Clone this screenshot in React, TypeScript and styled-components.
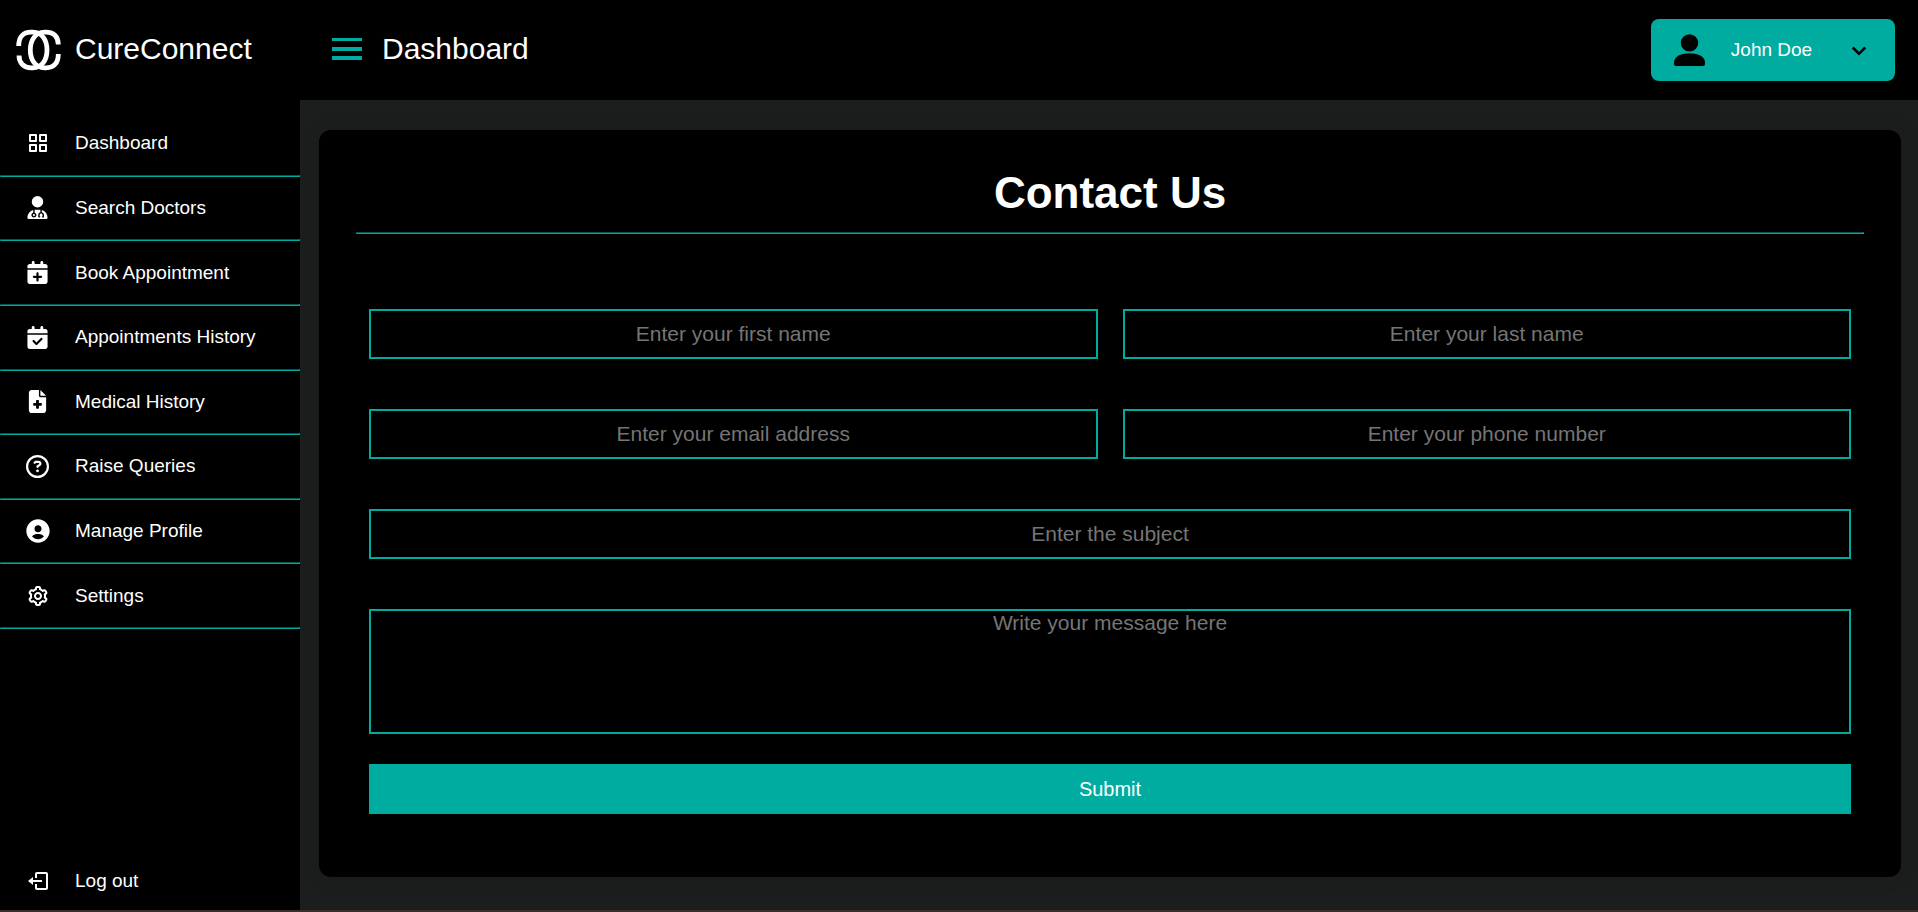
import React from 'react';
import styled, { createGlobalStyle } from 'styled-components';
import { BiGridAlt, BiCog, BiLogOut, BiChevronDown, BiSolidUserCircle } from 'react-icons/bi';
import {
  FaUserDoctor,
  FaCalendarPlus,
  FaCalendarCheck,
  FaFileMedical,
  FaRegCircleQuestion,
} from 'react-icons/fa6';
import type { IconType } from 'react-icons';

const teal = '#00aca0';

const GlobalStyle = createGlobalStyle`
  * { box-sizing: border-box; }
  body {
    margin: 0;
    background: #1c1e1d;
    color: #fff;
    font-family: "Liberation Sans", Arial, sans-serif;
  }
`;

const Page = styled.div`
  display: grid;
  grid-template-columns: 300px minmax(0, 1fr);
  grid-template-rows: 100px 1fr;
  min-height: 100vh;
  border-bottom: 2px solid #3a2e2a;
`;

const Brand = styled.a`
  display: flex;
  align-items: center;
  gap: 14px;
  padding-left: 16px;
  background: #000;
  color: #fff;
  font-size: 30px;
  line-height: 34px;
  text-decoration: none;
`;

const BrandName = styled.span`
  padding-bottom: 2px;
`;

const TopBar = styled.header`
  display: flex;
  align-items: center;
  justify-content: space-between;
  padding: 0 23px 0 32px;
  background: #000;
`;

const TopTitle = styled.div`
  display: flex;
  align-items: center;
  gap: 20px;
  padding-bottom: 2px;
  font-size: 30px;
  line-height: 34px;
`;

const MenuButton = styled.button`
  display: flex;
  padding: 0;
  border: 0;
  background: none;
  color: ${teal};
  cursor: pointer;
`;

const ProfileButton = styled.button`
  display: flex;
  align-items: center;
  width: 244px;
  height: 62px;
  padding: 0 21px 0 23px;
  border: 0;
  border-radius: 8px;
  background: ${teal};
  color: #000;
  font: 19px/24px "Liberation Sans", Arial, sans-serif;
  cursor: pointer;
`;

const ProfileName = styled.span`
  flex: 1;
  padding-right: 6px;
  color: #fff;
  text-align: center;
`;

const Sidebar = styled.nav`
  display: flex;
  flex-direction: column;
  justify-content: space-between;
  padding-top: 12px;
  background: #000;
`;

const NavList = styled.ul`
  display: grid;
  grid-template-rows: repeat(8, 1fr);
  height: 517px;
  margin: 0;
  padding: 0;
  list-style: none;
`;

const NavItem = styled.li`
  display: flex;
  flex-direction: column;
`;

const NavLink = styled.a`
  display: flex;
  flex: 1;
  align-items: center;
  gap: 25px;
  padding-left: 25px;
  color: #fff;
  font-size: 19px;
  line-height: 24px;
  text-decoration: none;
`;

const NavIcon = styled.span`
  display: flex;
  justify-content: center;
  width: 25px;

  svg { flex-shrink: 0; }
`;

const LogoutLink = styled(NavLink)`
  flex: none;
  height: 58px;
`;

const Rule = styled.hr`
  width: 100%;
  margin: 0;
  border: 1px inset ${teal};
`;

const Main = styled.main`
  padding: 30px 17px 33px 19px;
`;

const Card = styled.section`
  padding: 38px 37px 63px;
  border-radius: 12px;
  background: #000;
  box-shadow: 0 0 20px rgba(0, 0, 0, 0.1);
`;

const Heading = styled.h1`
  margin: 0 0 14px;
  font-size: 44px;
  line-height: 50px;
  text-align: center;
`;

const Form = styled.form`
  display: grid;
  grid-template-columns: repeat(2, minmax(0, 1fr));
  gap: 50px 25px;
  padding: 75px 13px 0;
`;

const Field = styled.input<{ $wide?: boolean }>`
  width: 100%;
  height: 50px;
  padding: 0;
  grid-column: ${p => (p.$wide ? '1 / -1' : 'auto')};
  border: 2px solid ${teal};
  border-radius: 0;
  background: #000;
  color: #fff;
  font: 21px/24px "Liberation Sans", Arial, sans-serif;
  text-align: center;
  &::placeholder { color: #757575; }
`;

const MessageGroup = styled.div`
  display: flex;
  flex-direction: column;
  gap: 30px;
  grid-column: 1 / -1;
`;

const Message = styled(Field).attrs({ as: 'textarea' })`
  height: 125px;
  resize: none;
`;

const Submit = styled.button`
  height: 50px;
  border: 0;
  background: ${teal};
  color: #fff;
  font: 20px/24px "Liberation Sans", Arial, sans-serif;
  cursor: pointer;
`;

const Logo = () => (
  <svg width="45" height="42" viewBox="0 0 45 42" fill="none" stroke="#fff" strokeWidth="4.8" aria-hidden="true">
    <path d="M2.7 17C2.7 8 7 3.2 15 3.2H17C26 3.2 31 11 31 21C31 31 26 38.8 17 38.8H15C8 38.8 3 34 3 26.5" />
    <path d="M42.3 15.5C42.3 8 38 3.2 30 3.2H28.5C19.5 3.2 14.3 11 14.3 21C14.3 31 19.5 38.8 28.5 38.8H30C38 38.8 42.3 34 42.3 25" />
  </svg>
);

const MenuIcon = () => (
  <svg width="30" height="22" viewBox="0 0 30 22" fill="currentColor" aria-hidden="true">
    <path d="M0 0H30V3H0ZM0 9H30V13H0ZM0 18H30V22H0Z" />
  </svg>
);

const PersonIcon = () => (
  <svg width="31" height="32" viewBox="0 0 31 32" fill="currentColor" aria-hidden="true">
    <circle cx="15.5" cy="8.9" r="8.7" />
    <path d="M0 28.5C0 23 6 19.2 15.5 19.2S31 23 31 28.5V30Q31 32 29 32H2Q0 32 0 30Z" />
  </svg>
);

const links: { label: string; Icon: IconType; size: number }[] = [
  { label: 'Dashboard', Icon: BiGridAlt, size: 24 },
  { label: 'Search Doctors', Icon: FaUserDoctor, size: 23 },
  { label: 'Book Appointment', Icon: FaCalendarPlus, size: 23 },
  { label: 'Appointments History', Icon: FaCalendarCheck, size: 23 },
  { label: 'Medical History', Icon: FaFileMedical, size: 23 },
  { label: 'Raise Queries', Icon: FaRegCircleQuestion, size: 23 },
  { label: 'Manage Profile', Icon: BiSolidUserCircle, size: 28 },
  { label: 'Settings', Icon: BiCog, size: 24 },
];

export default function App() {
  return (
    <>
      <GlobalStyle />
      <Page>
        <Brand href="#">
          <Logo />
          <BrandName>CureConnect</BrandName>
        </Brand>
        <TopBar>
          <TopTitle>
            <MenuButton type="button" aria-label="Toggle menu"><MenuIcon /></MenuButton>
            Dashboard
          </TopTitle>
          <ProfileButton type="button">
            <PersonIcon />
            <ProfileName>John Doe</ProfileName>
            <BiChevronDown size={30} />
          </ProfileButton>
        </TopBar>
        <Sidebar>
          <NavList>
            {links.map(({ label, Icon, size }) => (
              <NavItem key={label}>
                <NavLink href="#"><NavIcon><Icon size={size} /></NavIcon>{label}</NavLink>
                <Rule />
              </NavItem>
            ))}
          </NavList>
          <LogoutLink href="#"><NavIcon><BiLogOut size={24} /></NavIcon>Log out</LogoutLink>
        </Sidebar>
        <Main>
          <Card>
            <Heading>Contact Us</Heading>
            <Rule />
            <Form>
              <Field type="text" placeholder="Enter your first name" aria-label="First name" />
              <Field type="text" placeholder="Enter your last name" aria-label="Last name" />
              <Field type="email" placeholder="Enter your email address" aria-label="Email address" />
              <Field type="tel" placeholder="Enter your phone number" aria-label="Phone number" />
              <Field type="text" $wide placeholder="Enter the subject" aria-label="Subject" />
              <MessageGroup>
                <Message placeholder="Write your message here" aria-label="Message" />
                <Submit type="submit">Submit</Submit>
              </MessageGroup>
            </Form>
          </Card>
        </Main>
      </Page>
    </>
  );
}
